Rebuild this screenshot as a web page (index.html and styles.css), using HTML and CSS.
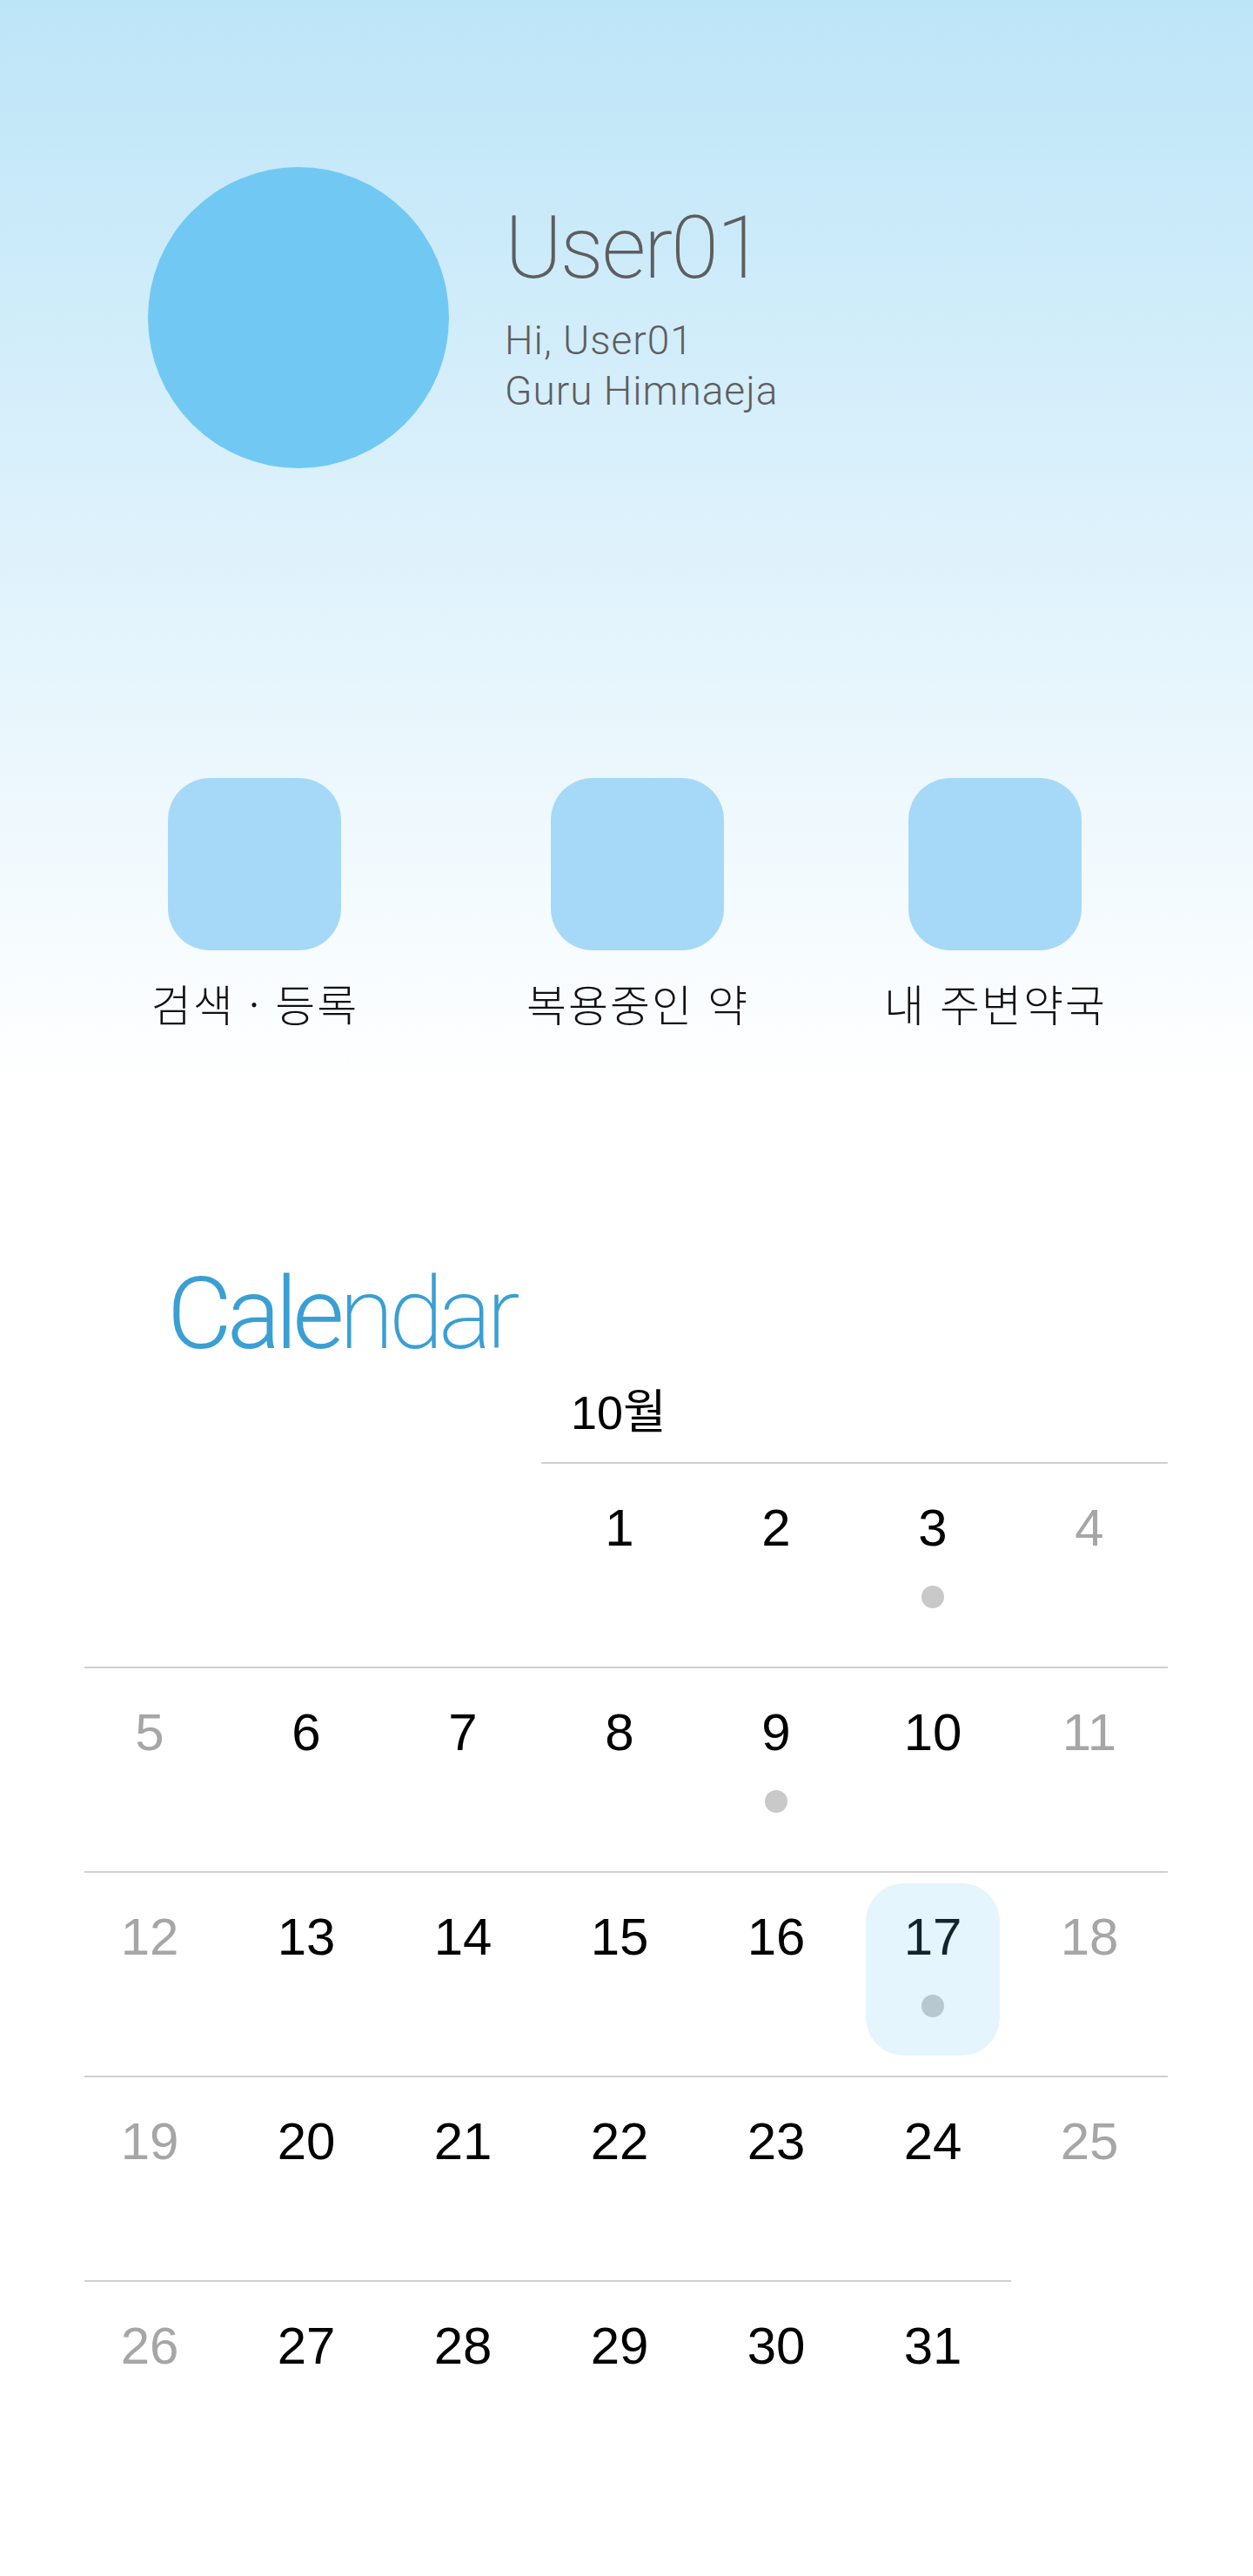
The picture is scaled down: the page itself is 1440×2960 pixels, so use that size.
FILE: index.html
```html
<!DOCTYPE html>
<html lang="ko">
<head>
<meta charset="utf-8">
<title>User01</title>
<link rel="stylesheet" href="styles.css">
</head>
<body>
<div class="page">
  <section class="profile">
    <div class="avatar"></div>
    <div class="info">
      <div class="name">User01</div>
      <div class="sub">Hi, User01</div>
      <div class="sub">Guru Himnaeja</div>
    </div>
  </section>

  <nav class="menu">
    <div class="menu-item"><div class="menu-icon"></div><div class="menu-label">검색 · 등록</div></div>
    <div class="menu-item"><div class="menu-icon"></div><div class="menu-label">복용중인 약</div></div>
    <div class="menu-item"><div class="menu-icon"></div><div class="menu-label">내 주변약국</div></div>
  </nav>

  <section class="calendar">
    <h1 class="cal-title"><span class="strong">Cale</span><span class="thin">ndar</span></h1>
    <div class="month">10월</div>
    <div class="grid">
      <div class="cell empty"></div>
      <div class="cell empty"></div>
      <div class="cell empty"></div>
      <div class="cell"><div class="day"><span class="num">1</span></div></div>
      <div class="cell"><div class="day"><span class="num">2</span></div></div>
      <div class="cell"><div class="day"><span class="num">3</span><span class="dot"></span></div></div>
      <div class="cell weekend"><div class="day"><span class="num">4</span></div></div>

      <div class="cell weekend"><div class="day"><span class="num">5</span></div></div>
      <div class="cell"><div class="day"><span class="num">6</span></div></div>
      <div class="cell"><div class="day"><span class="num">7</span></div></div>
      <div class="cell"><div class="day"><span class="num">8</span></div></div>
      <div class="cell"><div class="day"><span class="num">9</span><span class="dot"></span></div></div>
      <div class="cell"><div class="day"><span class="num">10</span></div></div>
      <div class="cell weekend"><div class="day"><span class="num">11</span></div></div>

      <div class="cell weekend"><div class="day"><span class="num">12</span></div></div>
      <div class="cell"><div class="day"><span class="num">13</span></div></div>
      <div class="cell"><div class="day"><span class="num">14</span></div></div>
      <div class="cell"><div class="day"><span class="num">15</span></div></div>
      <div class="cell"><div class="day"><span class="num">16</span></div></div>
      <div class="cell"><div class="day today"><span class="num">17</span><span class="dot"></span></div></div>
      <div class="cell weekend"><div class="day"><span class="num">18</span></div></div>

      <div class="cell weekend"><div class="day"><span class="num">19</span></div></div>
      <div class="cell"><div class="day"><span class="num">20</span></div></div>
      <div class="cell"><div class="day"><span class="num">21</span></div></div>
      <div class="cell"><div class="day"><span class="num">22</span></div></div>
      <div class="cell"><div class="day"><span class="num">23</span></div></div>
      <div class="cell"><div class="day"><span class="num">24</span></div></div>
      <div class="cell weekend"><div class="day"><span class="num">25</span></div></div>

      <div class="cell weekend"><div class="day"><span class="num">26</span></div></div>
      <div class="cell"><div class="day"><span class="num">27</span></div></div>
      <div class="cell"><div class="day"><span class="num">28</span></div></div>
      <div class="cell"><div class="day"><span class="num">29</span></div></div>
      <div class="cell"><div class="day"><span class="num">30</span></div></div>
      <div class="cell"><div class="day"><span class="num">31</span></div></div>
      <div class="cell empty"></div>
    </div>
  </section>
</div>
</body>
</html>
```

FILE: styles.css
```css
html, body {
  margin: 0;
  padding: 0;
  background: #ffffff;
}

.page {
  width: 1440px;
  min-height: 2960px;
  background: linear-gradient(180deg, #bde5f8 0px, #ffffff 1250px) no-repeat;
  font-family: "Roboto", "Liberation Sans", sans-serif;
}

/* ---------- profile ---------- */
.profile {
  display: flex;
  align-items: flex-start;
  padding: 192px 0 0 170px;
}

.avatar {
  width: 346px;
  height: 346px;
  border-radius: 50%;
  background: #71c9f3;
  flex: none;
}

.info {
  margin-left: 64px;
  margin-top: 43px;
  color: #5e5e5e;
}

.name {
  font-size: 100px;
  line-height: 100px;
  font-weight: 200;
  letter-spacing: -2.5px;
}

.sub {
  font-size: 46px;
  line-height: 58px;
  font-weight: 300;
  letter-spacing: 1px;
}

.name + .sub {
  margin-top: 27px;
}

/* ---------- menu ---------- */
.menu {
  display: flex;
  margin-top: 356px;
  padding-left: 142px;
}

.menu-item {
  width: 300px;
  display: flex;
  flex-direction: column;
  align-items: center;
}

.menu-item:nth-child(2) {
  margin-left: 140px;
}

.menu-item:nth-child(3) {
  margin-left: 111px;
}

.menu-icon {
  width: 199px;
  height: 198px;
  border-radius: 48px;
  background: #a6d9f7;
}

.menu-label {
  margin-top: 36px;
  margin-bottom: 1px;
  padding-left: 2px;
  font-family: "Noto Sans CJK KR", sans-serif;
  font-size: 50px;
  line-height: 48px;
  font-weight: 300;
  letter-spacing: 2px;
  color: #111111;
  white-space: nowrap;
}

/* ---------- calendar ---------- */
.calendar {
  padding-left: 97px;
}

.cal-title {
  margin: 275px 0 0 95px;
  font-size: 115px;
  line-height: 115px;
  font-weight: 300;
  color: #3a9fd3;
  letter-spacing: -6px;
}

.cal-title .strong {
  font-weight: 300;
}

.cal-title .thin {
  font-weight: 200;
}

.month {
  margin: 29px 0 30px 559px;
  font-family: "Liberation Sans", "Noto Sans CJK KR", sans-serif;
  font-size: 54px;
  line-height: 54px;
  color: #000000;
}

.grid {
  display: grid;
  grid-template-columns: 165px repeat(6, 180px);
  width: 1245px;
}

.cell {
  height: 233px;
  border-top: 2px solid #d0d0d0;
  display: flex;
  justify-content: center;
}

.cell:nth-child(7n+1) {
  padding-right: 15px;
}

.cell.empty {
  border-top-color: transparent;
}

.day {
  position: relative;
  margin-top: 12px;
  width: 154px;
  height: 198px;
  border-radius: 44px;
  padding-top: 32px;
  box-sizing: border-box;
  display: flex;
  flex-direction: column;
  align-items: center;
}

.num {
  font-family: "Liberation Sans", sans-serif;
  font-size: 60px;
  line-height: 60px;
  color: #000000;
}

.weekend .num {
  color: #a6a6a6;
}

.dot {
  margin-top: 36px;
  width: 26px;
  height: 26px;
  border-radius: 50%;
  background: #c9c9c9;
}

.day.today::after {
  content: "";
  position: absolute;
  inset: 0;
  border-radius: 44px;
  background: rgba(113, 201, 243, 0.18);
}
```
